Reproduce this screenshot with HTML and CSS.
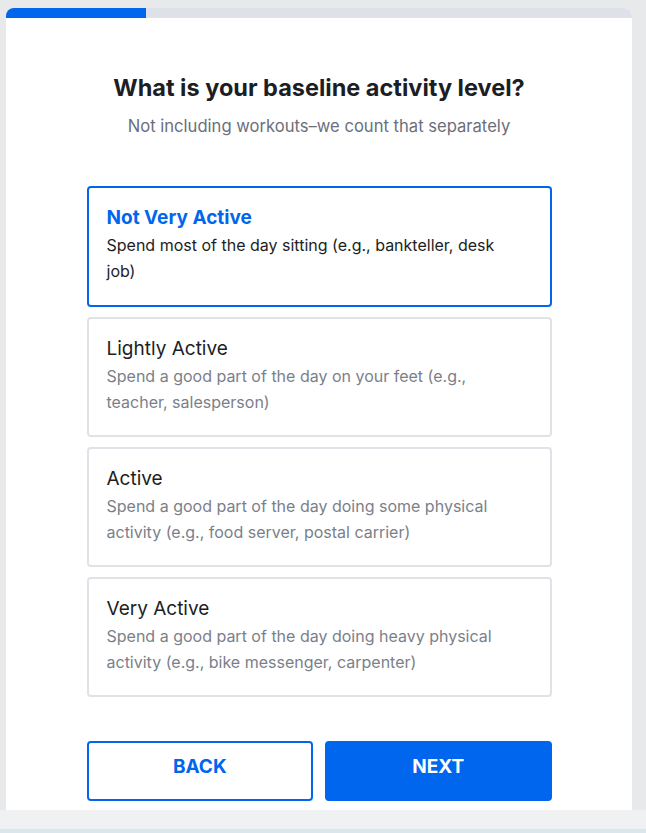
FILE: index.html
```html
<!DOCTYPE html>
<html lang="en">
<head>
<meta charset="utf-8">
<link rel="stylesheet" href="styles.css">
</head>
<body>
<div class="page">
  <div class="card">
    <div class="progress"><div class="progress-fill" style="width:140px"></div></div>
    <div class="content">
      <h1 class="title">What is your baseline activity level?</h1>
      <p class="subtitle">Not including workouts–we count that separately</p>
      <div class="options">
        <div class="option selected">
          <div class="option-title">Not Very Active</div>
          <div class="option-desc">Spend most of the day sitting (e.g., bankteller, desk job)</div>
        </div>
        <div class="option">
          <div class="option-title">Lightly Active</div>
          <div class="option-desc">Spend a good part of the day on your feet (e.g., teacher, salesperson)</div>
        </div>
        <div class="option">
          <div class="option-title">Active</div>
          <div class="option-desc">Spend a good part of the day doing some physical activity (e.g., food server, postal carrier)</div>
        </div>
        <div class="option">
          <div class="option-title">Very Active</div>
          <div class="option-desc">Spend a good part of the day doing heavy physical activity (e.g., bike messenger, carpenter)</div>
        </div>
      </div>
      <div class="buttons">
        <button class="btn btn-back">BACK</button>
        <button class="btn btn-next">NEXT</button>
      </div>
    </div>
  </div>
</div>
<div class="foot"></div>
<div class="foot-edge"></div>
</body>
</html>
```
FILE: styles.css
```css
* { box-sizing: border-box; }
html, body { margin: 0; padding: 0; }
body {
  background: #e8e9eb;
  font-family: Inter, "Liberation Sans", sans-serif;
  height: 833px;
  overflow: hidden;
}
.page {
  padding: 8px 14px 0 6px;
}
.card {
  background: #fff;
  border-radius: 8px 8px 0 0;
  overflow: hidden;
  height: 802px;
}
.progress {
  height: 10px;
  background: #dee1e7;
}
.progress-fill {
  height: 100%;
  background: #0066ee;
}
.content {
  width: 465px;
  margin: 0 auto;
  padding-top: 56px;
}
.title {
  margin: 0;
  text-align: center;
  font-size: 23.5px;
  line-height: 28px;
  font-weight: 700;
  color: #1c1e24;
}
.subtitle {
  margin: 12px 0 0;
  text-align: center;
  font-size: 16.6px;
  line-height: 24px;
  color: #6b6f7b;
}
.options {
  margin-top: 48px;
  display: flex;
  flex-direction: column;
  gap: 10px;
}
.option {
  border: 2px solid #dfe2e6;
  border-radius: 4px;
  padding: 17px 30px 21px 18px;
  height: 120px;
}
.option.selected {
  border-color: #0066ee;
  height: 121px;
}
.option-title {
  font-size: 19px;
  line-height: 26px;
  color: #1c1e24;
}
.selected .option-title {
  color: #0066ee;
  font-weight: 700;
}
.option-desc {
  font-size: 16px;
  line-height: 26px;
  margin-top: 1px;
  color: #7b7f8a;
}
.selected .option-desc {
  color: #1c1e24;
}
.buttons {
  margin-top: 44px;
  display: flex;
  gap: 12px;
}
.btn {
  flex: 1;
  height: 60px;
  padding: 0 0 10px;
  border-radius: 4px;
  font-family: inherit;
  font-size: 19px;
  font-weight: 700;
  cursor: pointer;
}
.btn-back {
  background: #fff;
  border: 2px solid #0066ee;
  color: #0066ee;
}
.btn-next {
  background: #0066ee;
  border: 2px solid #0066ee;
  color: #fff;
}
.foot {
  height: 19px;
  background: #f0f1f2;
}
.foot-edge {
  height: 4px;
  background: #d9e6ec;
}
```
